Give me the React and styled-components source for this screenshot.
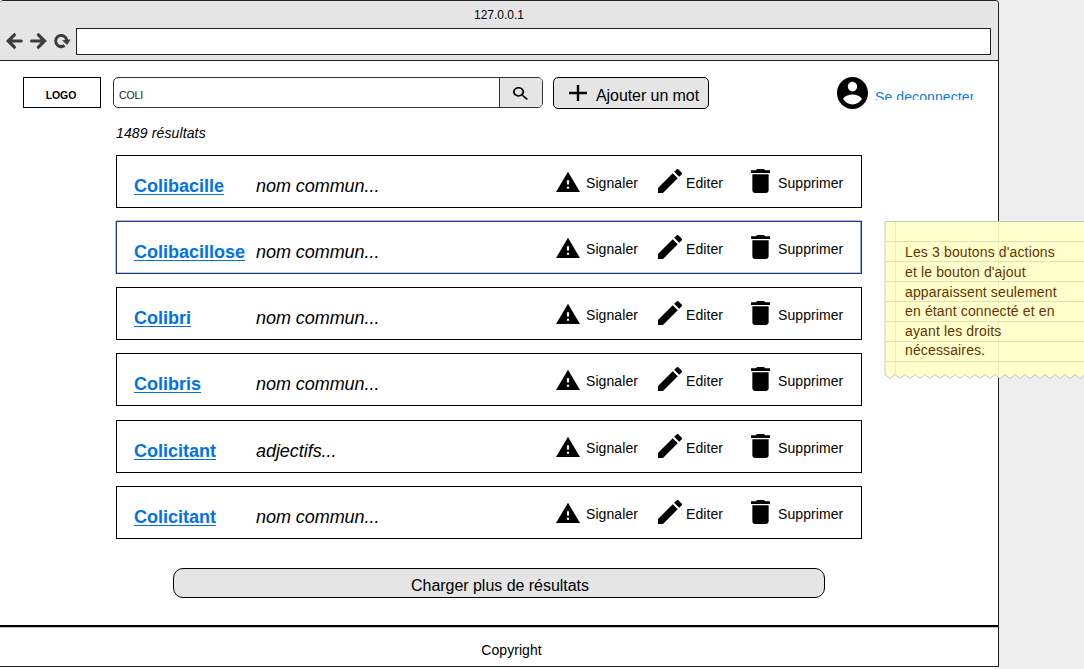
import React from "react";
import styled, { createGlobalStyle } from "styled-components";

const Global = createGlobalStyle`
  *, *::before, *::after { box-sizing: border-box; }
  body { margin: 0; background: #ededed; overflow: hidden; }
  #root { font-family: "Liberation Sans", Arial, sans-serif; color: #000; }
  svg { display: block; flex: none; }
`;

const Desktop = styled.div`
  position: relative;
  width: 1084px;
  height: 669px;
  overflow: hidden;
`;

const Browser = styled.div`
  display: flex;
  flex-direction: column;
  width: 999px;
  height: 667px;
  background: #fff;
  border: 1px solid #231f20;
  border-left: 0;
  border-radius: 4px 4px 0 0;
  box-shadow: -2px 2px 0 #fff;
`;

const Chrome = styled.header`
  display: flex;
  flex: none;
  flex-direction: column;
  height: 60px;
  background: #e5e5e5;
  border-bottom: 1px solid #231f20;
  border-radius: 3px 3px 0 0;
`;

const PageTitle = styled.div`
  height: 27px;
  font-size: 12px;
  line-height: 28px;
  text-align: center;
`;

const NavBar = styled.div`
  display: flex;
  align-items: flex-start;
  padding: 0 7px 0 5px;
`;

const NavIcons = styled.div`
  display: flex;
  gap: 6px;
  padding-top: 4px;
`;

const AddressBar = styled.div`
  flex: 1;
  height: 27px;
  margin-left: 5px;
  background: #fff;
  border: 1px solid #231f20;
`;

const Toolbar = styled.div`
  display: flex;
  flex: none;
  align-items: flex-start;
  height: 46px;
  padding: 16px 0 0 23px;
`;

const Logo = styled.div`
  width: 78px;
  height: 31px;
  padding-right: 2px;
  border: 1px solid #000;
  font: bold 10.5px/35px "Liberation Sans", sans-serif;
  letter-spacing: -0.15px;
  text-align: center;
`;

const Search = styled.div`
  display: flex;
  width: 430px;
  height: 31px;
  margin-left: 12px;
  border: 1px solid #333;
  border-radius: 5px;
  overflow: hidden;
`;

const SearchText = styled.div`
  flex: 1;
  padding-left: 5px;
  font-size: 10.5px;
  line-height: 34px;
  letter-spacing: -0.1px;
  color: #222;
`;

const SearchButton = styled.div`
  display: flex;
  align-items: center;
  justify-content: center;
  width: 43px;
  padding: 2px 1px 0 0;
  background: #e5e5e5;
  border-left: 1px solid #333;
`;

const AddButton = styled.div`
  display: flex;
  width: 156px;
  height: 32px;
  margin-left: 10px;
  padding: 6px 0 0 15px;
  background: #e5e5e5;
  border: 1px solid #000;
  border-radius: 5px;
`;

const AddLabel = styled.span`
  margin-left: 9px;
  padding-top: 2px;
  font-size: 16px;
  line-height: 20px;
  letter-spacing: -0.07px;
  white-space: nowrap;
`;

const Account = styled.div`
  display: flex;
  margin-left: 128px;
`;

const AccountLink = styled.a`
  width: 98px;
  height: 14px;
  margin: 9px 0 0 7px;
  overflow: hidden;
  font-size: 14px;
  line-height: 23px;
  letter-spacing: 0.1px;
  color: #0d79ef;
  white-space: nowrap;
`;

const ResultCount = styled.div`
  flex: none;
  height: 20px;
  margin: 16px 0 0 116px;
  font-size: 14px;
  font-style: italic;
  line-height: 20px;
  letter-spacing: 0.13px;
`;

const Results = styled.div`
  display: flex;
  flex: none;
  flex-direction: column;
  gap: 13.2px;
  margin: 11.75px 0 0 116px;
`;

const Row = styled.div`
  display: flex;
  align-items: flex-start;
  width: 746px;
  height: 53px;
  padding-left: 17px;
  border: 1px solid ${(p) => (p.$active ? "#1f3b85" : "#000")};
  box-shadow: ${(p) => (p.$active ? "inset -1px 0 0 #8ba6dc, inset 0 -1px 0 #b9c9ea, -1px 0 0 #a9bde6, 0 -1px 0 #a9bde6" : "none")};
`;

const Word = styled.a`
  width: 122px;
  margin-top: 19px;
  font-size: 18px;
  font-weight: bold;
  line-height: 22px;
  color: #0071ea;
  text-decoration: underline;
  text-decoration-thickness: 1px;
  text-underline-offset: 2px;
  text-decoration-skip-ink: none;
`;

const Kind = styled.span`
  width: 300px;
  margin-top: 19px;
  font-size: 18px;
  font-style: italic;
  line-height: 22px;
  letter-spacing: -0.05px;
`;

const Action = styled.div`
  display: flex;
  width: ${(p) => p.$width}px;
  padding-top: 13px;
`;

const ActionLabel = styled.span`
  margin-left: ${(p) => p.$gap}px;
  padding-top: 4px;
  font-size: 14px;
  line-height: 20px;
  letter-spacing: 0.08px;
`;

const LoadMore = styled.div`
  flex: none;
  width: 652px;
  height: 30px;
  margin: 29px 0 0 173px;
  padding-left: 2px;
  background: #e5e5e5;
  border: 1px solid #000;
  border-radius: 10px;
  font-size: 16px;
  line-height: 33px;
  letter-spacing: -0.03px;
  text-align: center;
`;

const Footer = styled.footer`
  flex: 1 1 0;
  min-height: 0;
  margin-top: 27px;
  padding-left: 25px;
  border-top: 2px solid #000;
  box-shadow: inset 0 1px 0 #c4c8c4;
  font-size: 14px;
  line-height: 46px;
  letter-spacing: 0.05px;
  text-align: center;
`;

const Note = styled.aside`
  position: absolute;
  left: 884px;
  top: 220px;
  width: 200px;
  height: 160px;
  padding: 23.4px 0 0 21px;
  color: #663300;
  font-size: 14px;
  line-height: 19.6px;
  letter-spacing: 0.14px;
  white-space: nowrap;
`;

const NotePaper = styled.svg`
  position: absolute;
  inset: 0;
`;

const NoteLine = styled.div`
  position: relative;
`;

const BackIcon = () => (
  <svg width="18" height="18" viewBox="0 0 18 18" fill="none" stroke="#3c3c3c" strokeWidth="3.2" strokeLinecap="round">
    <path d="M3.2 9H16.2M9.4 2.8L3.2 9l6.2 6.2" />
  </svg>
);

const ForwardIcon = () => (
  <svg width="18" height="18" viewBox="0 0 18 18" fill="none" stroke="#3c3c3c" strokeWidth="3.2" strokeLinecap="round">
    <path d="M2.6 9H15.6M9.4 2.8L15.6 9l-6.2 6.2" />
  </svg>
);

const ReloadIcon = () => (
  <svg width="18" height="18" viewBox="0 0 18 18">
    <path d="M13.8 8.2A5.6 5.6 0 1 0 11.6 13.5" fill="none" stroke="#3c3c3c" strokeWidth="3" />
    <path d="M9 8.2L17.6 7.4L14.2 13z" fill="#3c3c3c" />
  </svg>
);

const WarningIcon = () => (
  <svg width="24" height="24" viewBox="1 -0.6 22 22.5" preserveAspectRatio="none">
    <path d="M1 21h22L12 2 1 21zm12-3h-2v-2h2v2zm0-4h-2v-4h2v4z" />
  </svg>
);

const PencilIcon = () => (
  <svg width="24" height="24" viewBox="3 3 18 18">
    <path d="M3 17.25V21h3.75L17.81 9.94l-3.75-3.75L3 17.25zM20.71 7.04c.39-.39.39-1.02 0-1.41l-2.34-2.34c-.39-.39-1.02-.39-1.41 0l-1.83 1.83 3.75 3.75 1.83-1.83z" />
  </svg>
);

const TrashIcon = () => (
  <svg width="19" height="24" viewBox="5 3 14 18" preserveAspectRatio="none">
    <path d="M6 19c0 1.1.9 2 2 2h8c1.1 0 2-.9 2-2V7H6v12zM19 4h-3.5l-1-1h-5l-1 1H5v2h14V4z" />
  </svg>
);

const SearchIcon = () => (
  <svg width="15" height="13" viewBox="3 3 17.5 17.5" preserveAspectRatio="none">
    <path d="M15.5 14h-.79l-.28-.27C15.41 12.59 16 11.11 16 9.5 16 5.91 13.09 3 9.5 3S3 5.91 3 9.5 5.91 16 9.5 16c1.61 0 3.09-.59 4.23-1.57l.27.28v.79l5 4.99L20.49 19l-4.99-5zm-6 0C7.01 14 5 11.99 5 9.5S7.01 5 9.5 5 14 7.01 14 9.5 11.99 14 9.5 14z" />
  </svg>
);

const PlusIcon = () => (
  <svg width="18" height="18" viewBox="0 0 18 18">
    <path d="M0 9H18M9 1V17" stroke="#000" strokeWidth="2.4" />
  </svg>
);

const AccountIcon = () => (
  <svg width="31" height="32" viewBox="2 2 20 20" preserveAspectRatio="none">
    <path d="M12 2C6.48 2 2 6.48 2 12s4.48 10 10 10 10-4.48 10-10S17.52 2 12 2zm0 3c1.66 0 3 1.34 3 3s-1.34 3-3 3-3-1.34-3-3 1.34-3 3-3zm0 14.2c-2.5 0-4.71-1.28-6-3.22.03-1.99 4-3.08 6-3.08 1.99 0 5.97 1.09 6 3.08-1.29 1.94-3.5 3.22-6 3.22z" />
  </svg>
);

const entries = [
  { word: "Colibacille", kind: "nom commun..." },
  { word: "Colibacillose", kind: "nom commun...", active: true },
  { word: "Colibri", kind: "nom commun..." },
  { word: "Colibris", kind: "nom commun..." },
  { word: "Colicitant", kind: "adjectifs..." },
  { word: "Colicitant", kind: "nom commun..." },
];

const noteLines = [
  "Les 3 boutons d'actions",
  "et le bouton d'ajout",
  "apparaissent seulement",
  "en étant connecté et en",
  "ayant les droits",
  "nécessaires.",
];

const zigzag = Array.from({ length: 40 }, (_, i) => `L${1 + (i + 1) * 5} ${i % 2 ? 154.5 : 158.5}`).join("");

export default function App() {
  return (
    <Desktop>
      <Global />
      <Browser>
        <Chrome>
          <PageTitle>127.0.0.1</PageTitle>
          <NavBar>
            <NavIcons>
              <BackIcon />
              <ForwardIcon />
              <ReloadIcon />
            </NavIcons>
            <AddressBar />
          </NavBar>
        </Chrome>
        <Toolbar>
          <Logo>LOGO</Logo>
          <Search>
            <SearchText>COLI</SearchText>
            <SearchButton><SearchIcon /></SearchButton>
          </Search>
          <AddButton>
            <PlusIcon />
            <AddLabel>Ajouter un mot</AddLabel>
          </AddButton>
          <Account>
            <AccountIcon />
            <AccountLink>Se deconnecter</AccountLink>
          </Account>
        </Toolbar>
        <ResultCount>1489 résultats</ResultCount>
        <Results>
          {entries.map((entry, i) => (
            <Row key={i} $active={entry.active}>
              <Word>{entry.word}</Word>
              <Kind>{entry.kind}</Kind>
              <Action $width={102}>
                <WarningIcon />
                <ActionLabel $gap={6}>Signaler</ActionLabel>
              </Action>
              <Action $width={93}>
                <PencilIcon />
                <ActionLabel $gap={4}>Editer</ActionLabel>
              </Action>
              <Action $width={100}>
                <TrashIcon />
                <ActionLabel $gap={8}>Supprimer</ActionLabel>
              </Action>
            </Row>
          ))}
        </Results>
        <LoadMore>Charger plus de résultats</LoadMore>
        <Footer>Copyright</Footer>
      </Browser>
      <Note>
        <NotePaper width="200" height="160" viewBox="0 0 200 160">
          <path d={`M1 1.5V154.5${zigzag}V1.5z`} fill="#ffffcc" stroke="#c8c8c0" />
          <path d="M11.5 2V155" stroke="#fde3b8" />
          <path d="M114.5 2V155" stroke="#eeedbd" />
          <path d="M1 21.5H200M1 41.5H200M1 61.5H200M1 81.5H200M1 101.5H200M1 121.5H200M1 141.5H200" stroke="#e2e0b6" />
        </NotePaper>
        {noteLines.map((line) => (
          <NoteLine key={line}>{line}</NoteLine>
        ))}
      </Note>
    </Desktop>
  );
}
